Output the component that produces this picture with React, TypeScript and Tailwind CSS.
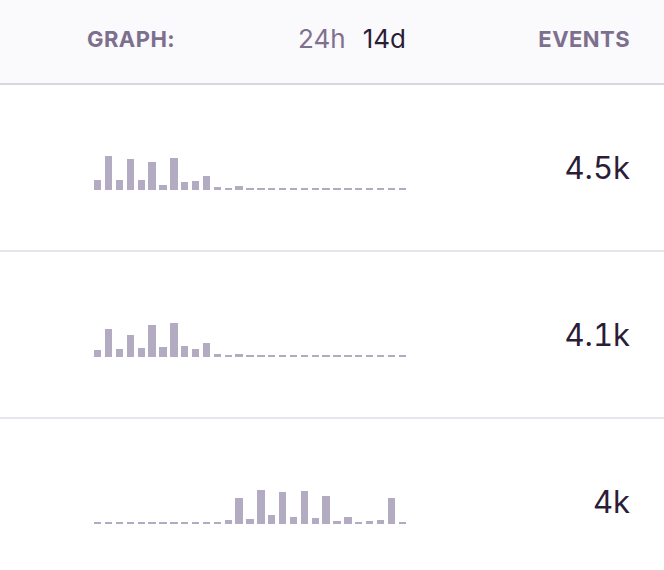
import React from 'react';

// bar heights in px for the 14d sparkline, one per bucket
const rows: { count: string; bars: number[] }[] = [
  {
    count: '4.5k',
    bars: [10, 34, 10, 31, 10, 28, 5, 32, 8, 9, 14, 3, 2, 4, 2, 2, 2, 2, 2, 2, 2, 2, 2, 2, 2, 2, 2, 2, 2],
  },
  {
    count: '4.1k',
    bars: [7, 28, 8, 22, 9, 32, 10, 34, 11, 8, 14, 3, 2, 3, 2, 2, 2, 2, 2, 2, 2, 2, 2, 2, 2, 2, 2, 2, 2],
  },
  {
    count: '4k',
    bars: [2, 2, 2, 2, 2, 2, 2, 2, 2, 2, 2, 2, 4, 26, 5, 34, 9, 32, 7, 33, 6, 28, 3, 7, 2, 3, 4, 26, 2],
  },
];

function Sparkline({ bars }: { bars: number[] }) {
  return (
    <div className="flex h-[45px] w-[312px] items-end gap-[3.5px]">
      {bars.map((h, i) => (
        <div key={i} className="flex-1 bg-[#b3abc1]" style={{ height: `${h}px` }} />
      ))}
    </div>
  );
}

export default function App() {
  return (
    <div className="w-[664px] h-[570px] overflow-hidden bg-white font-['Inter',sans-serif]">
      {/* Header */}
      <div className="flex h-[85px] items-center border-b-2 border-[#dbd6e1] bg-[#faf9fb] pb-[5px]">
        <div className="ml-[87px] flex w-[319px] items-center justify-between">
          <span className="text-[22px] font-bold tracking-[0.02em] text-[#7d6f8e]">GRAPH:</span>
          <div className="flex items-center gap-[17px] text-[26px] leading-none">
            <span className="text-[#80708f]">24h</span>
            <span className="text-[#2b1d38]">14d</span>
          </div>
        </div>
        <div className="flex-1 pr-[34px] text-right text-[22px] font-bold tracking-[0.02em] text-[#7d6f8e]">
          EVENTS
        </div>
      </div>

      {/* Rows */}
      {rows.map((row, i) => (
        <div key={i} className="flex h-[167px] items-center border-b-2 border-[#e8e4ec]">
          <div className="ml-[94px]">
            <Sparkline bars={row.bars} />
          </div>
          <div className="flex-1 pr-[34px] text-right text-[31px] leading-none tabular-nums text-[#2b1d38]">
            {row.count}
          </div>
        </div>
      ))}
    </div>
  );
}
